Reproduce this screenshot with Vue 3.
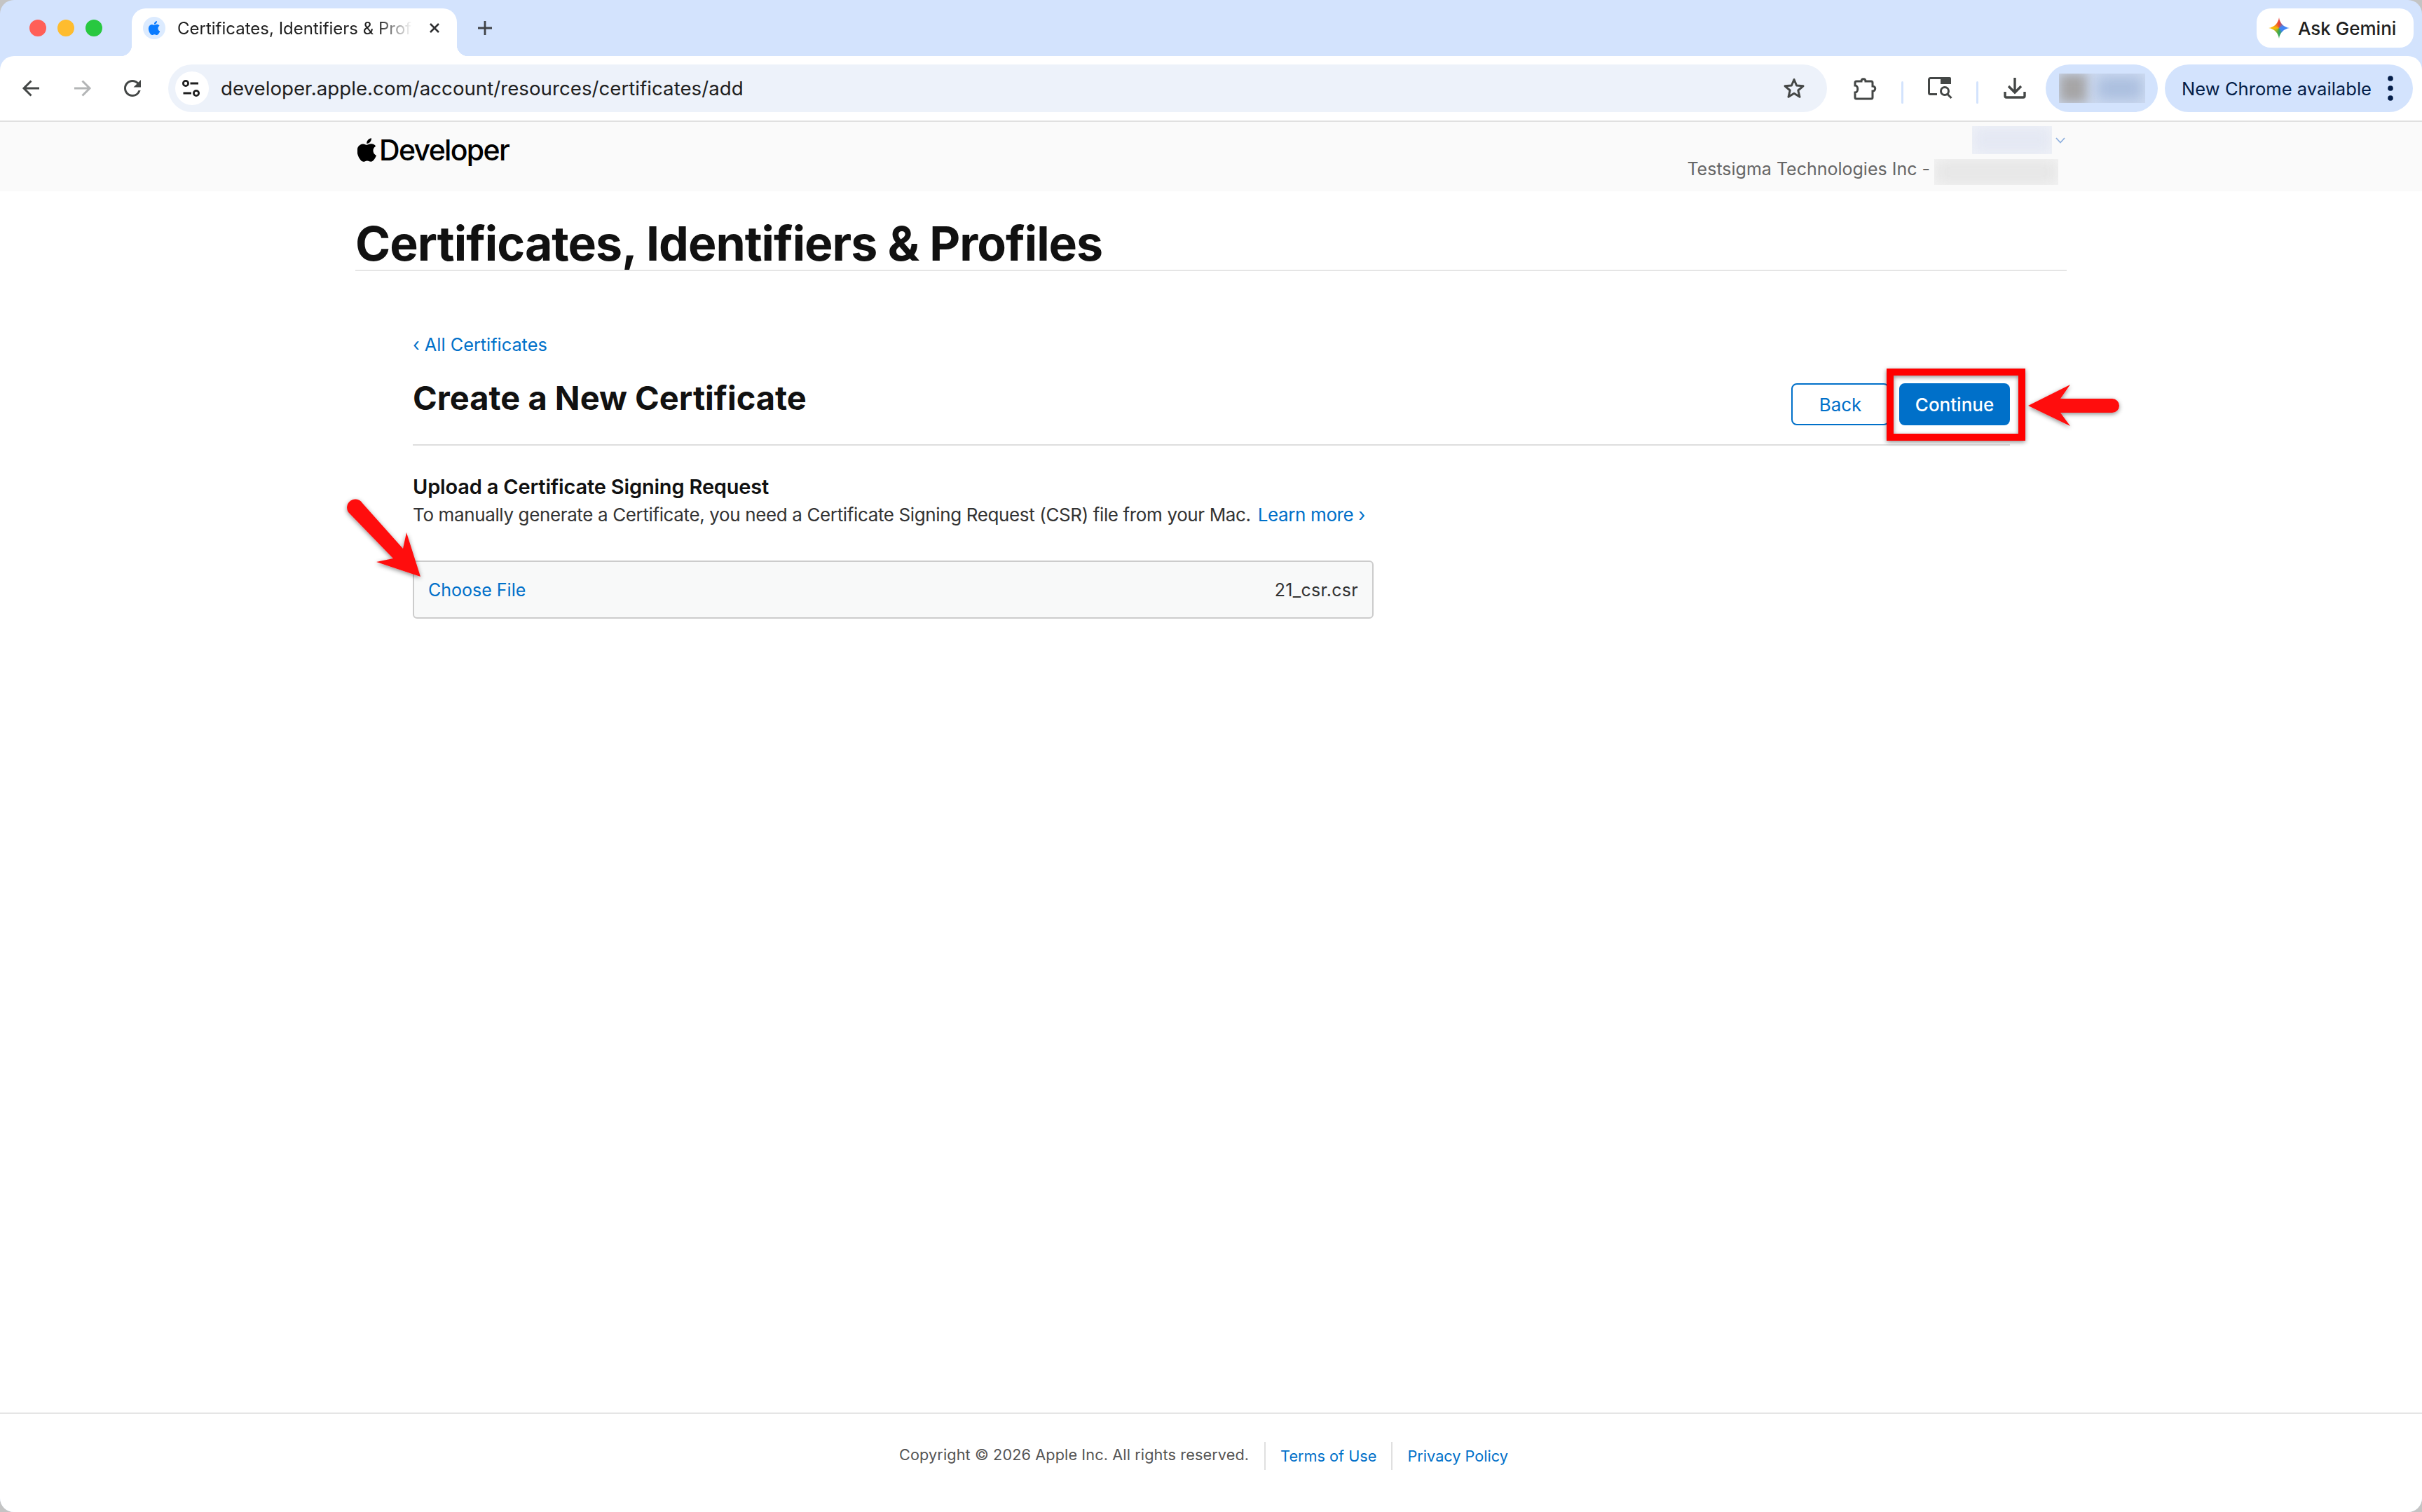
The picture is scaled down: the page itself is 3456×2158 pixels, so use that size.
<script setup>
const appleLogo =
  'M12.152 6.896c-.948 0-2.415-1.078-3.96-1.04-2.04.027-3.91 1.183-4.961 3.014-2.117 3.675-.546 9.103 1.519 12.09 1.013 1.454 2.208 3.09 3.792 3.039 1.52-.065 2.09-.987 3.935-.987 1.831 0 2.35.987 3.96.948 1.637-.026 2.676-1.48 3.676-2.948 1.156-1.688 1.636-3.325 1.662-3.415-.039-.013-3.182-1.221-3.22-4.857-.026-3.04 2.48-4.494 2.597-4.559-1.429-2.09-3.623-2.324-4.39-2.376-2-.156-3.675 1.09-4.61 1.09zM15.53 3.83c.843-1.012 1.4-2.427 1.245-3.83-1.207.052-2.662.805-3.532 1.818-.78.896-1.454 2.338-1.273 3.714 1.338.104 2.715-.688 3.559-1.701'
</script>

<template>
  <div class="window">
    <div class="tabstrip">
      <div class="lights">
        <span class="light red"></span>
        <span class="light yellow"></span>
        <span class="light green"></span>
      </div>
      <div class="tab">
        <span class="favicon">
          <svg width="20" height="20" viewBox="0 0 24 24"><path :d="appleLogo" fill="#0a7bff" /></svg>
        </span>
        <span class="tab-title">Certificates, Identifiers &amp; Profiles</span>
        <svg class="tab-close" width="16" height="16" viewBox="0 0 16 16">
          <path d="M2 2L14 14M14 2L2 14" stroke="#303133" stroke-width="2.6" fill="none" />
        </svg>
      </div>
      <svg class="new-tab" width="22" height="22" viewBox="0 0 22 22">
        <path d="M11 1V21M1 11H21" stroke="#3f4246" stroke-width="2.8" fill="none" />
      </svg>
      <div class="gemini">
        <span class="spark"></span>
        <span>Ask Gemini</span>
      </div>
    </div>

    <div class="toolbar">
      <button class="tool" type="button">
        <svg width="32" height="32" viewBox="0 0 32 32" fill="none" stroke="#444746" stroke-width="3">
          <path d="M27 16H6M15.5 5.5L5 16L15.5 26.5" />
        </svg>
      </button>
      <button class="tool" type="button">
        <svg width="32" height="32" viewBox="0 0 32 32" fill="none" stroke="#b3b5b6" stroke-width="3">
          <path d="M5 16H26M16.5 5.5L27 16L16.5 26.5" />
        </svg>
      </button>
      <button class="tool" type="button">
        <svg width="36" height="36" viewBox="0 0 24 24">
          <path
            fill="#444746"
            d="M17.65 6.35A7.958 7.958 0 0 0 12 4c-4.42 0-7.99 3.58-7.99 8s3.57 8 7.99 8c3.73 0 6.84-2.55 7.73-6h-2.08A5.99 5.99 0 0 1 12 18c-3.31 0-6-2.69-6-6s2.69-6 6-6c1.66 0 3.14.69 4.22 1.78L13 11h7V4l-2.35 2.35z"
          />
        </svg>
      </button>

      <div class="omnibox">
        <span class="site-info">
          <svg width="32" height="32" viewBox="0 0 32 32" fill="none" stroke="#1f1f1f" stroke-width="2.8">
            <circle cx="7" cy="9" r="3.6" />
            <path d="M13.5 9H25M3.5 23H15" />
            <circle cx="22" cy="23" r="3.6" />
          </svg>
        </span>
        <span class="url">developer.apple.com/account/resources/certificates/add</span>
        <svg class="star" width="32" height="32" viewBox="0 0 32 32">
          <path
            d="M16 3.5L19.6 12L29 12.8L21.8 19L24 28.3L16 23.3L8 28.3L10.2 19L3 12.8L12.4 12Z"
            fill="none"
            stroke="#444746"
            stroke-width="3"
            stroke-linejoin="round"
          />
        </svg>
      </div>

      <button class="tool tool-first" type="button">
        <svg width="33" height="33" viewBox="0 0 33 33" fill="none" stroke="#444746" stroke-width="3">
          <path
            d="M4 6H11C11 1.5 17 1.5 17 6H25A2 2 0 0 1 27 8V13C32 13 32 20 27 20V29A2 2 0 0 1 25 31H4A2 2 0 0 1 2 29V22C7 22 7 12 2 12V8A2 2 0 0 1 4 6Z"
          />
        </svg>
      </button>
      <span class="tool-sep"></span>
      <button class="tool" type="button">
        <svg width="35" height="32" viewBox="0 0 35 32" fill="none" stroke="#444746" stroke-width="3">
          <path d="M13 24.5H3.5A2 2 0 0 1 1.5 22.5V3.5A2 2 0 0 1 3.5 1.5H18" />
          <path d="M18 0H31A2 2 0 0 1 33 2V10H18Z" fill="#444746" stroke="none" />
          <circle cx="24" cy="20" r="5.5" />
          <path d="M28 24.5L33.5 30" />
        </svg>
      </button>
      <span class="tool-sep"></span>
      <button class="tool" type="button">
        <svg width="32" height="32" viewBox="0 0 32 32" fill="none" stroke="#444746" stroke-width="3.4">
          <path d="M16 1V21M7 13L16 22L25 13" />
          <path d="M2 21V27A2 2 0 0 0 4 29H28A2 2 0 0 0 30 27V21" />
        </svg>
      </button>
      <div class="profile">
        <span class="profile-blur">
          <i class="blur-avatar"></i>
          <i class="blur-name"></i>
        </span>
      </div>
      <div class="update-pill">
        <span>New Chrome available</span>
        <svg width="10" height="38" viewBox="0 0 10 38" fill="#041e49">
          <circle cx="5" cy="5" r="3.8" />
          <circle cx="5" cy="19" r="3.8" />
          <circle cx="5" cy="33" r="3.8" />
        </svg>
      </div>
    </div>

    <header class="dev-header">
      <div class="wrap dev-header-inner">
        <div class="dev-logo">
          <svg width="28" height="34" viewBox="2.5 0 20 24"><path :d="appleLogo" fill="#000" /></svg>
          <span>Developer</span>
        </div>
        <div class="account">
          <div class="account-name">
            <span class="blur-box blur-user"><i></i></span>
            <svg width="14" height="9" viewBox="0 0 14 9" fill="none" stroke="#8fb0de" stroke-width="1.8">
              <path d="M1 1L7 7.5L13 1" />
            </svg>
          </div>
          <div class="account-team">
            <span class="team-name">Testsigma Technologies Inc -</span>
            <span class="blur-box blur-team"><i></i></span>
          </div>
        </div>
      </div>
    </header>

    <main class="page">
      <div class="wrap">
        <h1 class="page-title">Certificates, Identifiers &amp; Profiles</h1>

        <div class="content">
          <a class="back-link" href="#">‹ All Certificates</a>

          <div class="form-head">
            <h2>Create a New Certificate</h2>
            <div class="form-actions">
              <button class="btn btn-outline" type="button">Back</button>
              <button class="btn btn-primary" type="button">Continue</button>
            </div>
          </div>

          <h3 class="section-title">Upload a Certificate Signing Request</h3>
          <p class="section-text">
            To manually generate a Certificate, you need a Certificate Signing Request (CSR) file from your Mac.
            <a href="#">Learn more ›</a>
          </p>

          <div class="file-box">
            <a href="#">Choose File</a>
            <span class="file-name">21_csr.csr</span>
          </div>
        </div>
      </div>
    </main>

    <footer class="page-footer">
      <span class="copyright">Copyright © 2026 Apple Inc. All rights reserved.</span>
      <a href="#">Terms of Use</a>
      <a href="#">Privacy Policy</a>
    </footer>

    <!-- annotations drawn on top of the screenshot -->
    <svg class="annotations" width="3456" height="2158" viewBox="0 0 3456 2158">
      <defs>
        <filter id="arrowShadow" x="-20%" y="-20%" width="140%" height="140%">
          <feDropShadow dx="0" dy="2" stdDeviation="3" flood-color="#000" flood-opacity="0.45" />
        </filter>
      </defs>
      <rect x="2697" y="531" width="188" height="93" fill="none" stroke="#ff0000" stroke-width="10" filter="url(#arrowShadow)" />
      <path
        d="M2894 579L2954 549L2940 569H3014A10 10 0 0 1 3014 589H2940L2954 608Z"
        fill="#ff0f0f"
        filter="url(#arrowShadow)"
      />
      <path
        d="M497 731A11.5 11.5 0 0 1 517 718L575 783L580 760L600 823L537 802L561 797Z"
        fill="#ff0f0f"
        filter="url(#arrowShadow)"
      />
    </svg>
  </div>
</template>

<style>
body {
  background: #c4c4c4;
}
</style>

<style scoped>
.window {
  position: relative;
  width: 3456px;
  height: 2158px;
  display: flex;
  flex-direction: column;
  overflow: hidden;
  background: #d3e3fd;
  border-radius: 20px;
  font-family: Inter, "Liberation Sans", sans-serif;
  color: #1f1f1f;
}

.tabstrip {
  height: 80px;
  flex: none;
  display: flex;
  align-items: flex-end;
  padding-left: 42px;
}

.lights {
  align-self: center;
  display: flex;
  gap: 16px;
  margin-right: 42px;
}

.light {
  width: 24px;
  height: 24px;
  border-radius: 50%;
}

.red {
  background: #ff5f57;
}

.yellow {
  background: #febc2e;
}

.green {
  background: #28c840;
}

.tab {
  position: relative;
  width: 464px;
  height: 68px;
  display: flex;
  align-items: center;
  padding: 0 24px 12px 16px;
  box-sizing: border-box;
  background: #fff;
  border-radius: 20px 20px 0 0;
}

.tab::before,
.tab::after {
  content: '';
  position: absolute;
  bottom: 0;
  width: 16px;
  height: 16px;
}

.tab::before {
  left: -16px;
  background: radial-gradient(circle at 0 0, #d3e3fd 16px, #fff 16.5px);
}

.tab::after {
  right: -16px;
  background: radial-gradient(circle at 100% 0, #d3e3fd 16px, #fff 16.5px);
}

.favicon {
  width: 32px;
  height: 32px;
  flex: none;
  display: flex;
  align-items: center;
  justify-content: center;
  border-radius: 50%;
  background: #dcebff;
}

.tab-title {
  flex: 1;
  min-width: 0;
  margin-left: 17px;
  margin-right: 24px;
  overflow: hidden;
  white-space: nowrap;
  font-size: 24px;
  color: #1f1f1f;
  -webkit-mask-image: linear-gradient(to right, #000 85%, transparent 100%);
  mask-image: linear-gradient(to right, #000 85%, transparent 100%);
}

.tab-close {
  flex: none;
}

.new-tab {
  align-self: center;
  margin-left: 29px;
}

.gemini {
  align-self: flex-start;
  margin: 12px 12px 0 auto;
  width: 224px;
  height: 56px;
  box-sizing: border-box;
  display: flex;
  align-items: center;
  gap: 12px;
  padding-left: 17px;
  background: #fff;
  border-radius: 20px;
  font-size: 26px;
  font-weight: 500;
}

.spark {
  width: 30px;
  height: 30px;
  background: conic-gradient(#ea4335 0deg, #4285f4 70deg, #4285f4 130deg, #34a853 180deg, #fbbc04 270deg, #ea4335 360deg);
  clip-path: path('M15 0C16 8 22 14 30 15C22 16 16 22 15 30C14 22 8 16 0 15C8 14 14 8 15 0Z');
}

.toolbar {
  height: 92px;
  flex: none;
  display: flex;
  align-items: flex-start;
  padding: 12px 12px 0 9px;
  box-sizing: border-box;
  background: #fff;
  border-radius: 20px 20px 0 0;
}

.tool {
  width: 72px;
  height: 68px;
  flex: none;
  display: flex;
  align-items: center;
  justify-content: center;
  padding: 0;
  border: none;
  background: none;
}

.omnibox {
  flex: none;
  width: 2367px;
  height: 68px;
  margin-left: 15px;
  margin-right: 18px;
  display: flex;
  align-items: center;
  padding: 0 31px 0 10px;
  box-sizing: border-box;
  background: #edf2fa;
  border-radius: 34px;
}

.site-info {
  width: 48px;
  height: 48px;
  flex: none;
  display: flex;
  align-items: center;
  justify-content: center;
  background: #fff;
  border-radius: 50%;
}

.url {
  flex: 1;
  margin-left: 17px;
  font-size: 27.7px;
  color: #1f1f1f;
  white-space: nowrap;
}

.tool-sep {
  width: 3px;
  height: 32px;
  flex: none;
  align-self: center;
  margin: 0 16px;
  border-radius: 2px;
  background: #d3e3fd;
}

.profile {
  width: 160px;
  height: 68px;
  flex: none;
  display: flex;
  align-items: center;
  justify-content: center;
  margin-left: 8px;
  margin-right: 10px;
  border-radius: 34px;
  background: #d3e3fd;
}

.profile-blur {
  width: 123px;
  height: 42px;
  display: flex;
  overflow: hidden;
  background: #cfdcf2;
}

.blur-avatar {
  width: 40px;
  background: #a6a5a6;
  filter: blur(8px);
}

.blur-name {
  flex: 1;
  margin: 4px 4px 4px 14px;
  background: #aabede;
  filter: blur(10px);
}

.update-pill {
  width: 354px;
  height: 68px;
  flex: none;
  display: flex;
  align-items: center;
  justify-content: space-between;
  padding: 0 27px 0 24px;
  box-sizing: border-box;
  border-radius: 34px;
  background: #d3e3fd;
  color: #041e49;
  font-size: 25.6px;
  white-space: nowrap;
}

.dev-header {
  height: 99px;
  flex: none;
  background: #fafafa;
  border-top: 2px solid #e0e0e0;
}

.wrap {
  width: 2442px;
  margin: 0 auto;
}

.dev-header-inner {
  display: flex;
  justify-content: space-between;
}

.dev-logo {
  display: flex;
  align-items: center;
  gap: 3px;
  height: 80px;
  margin-left: 3px;
  font-size: 41px;
  font-weight: 500;
  letter-spacing: -1.67px;
  color: #000;
}

.account {
  display: flex;
  flex-direction: column;
  align-items: flex-end;
  padding-top: 6px;
  margin-right: 12px;
}

.account-name {
  display: flex;
  align-items: center;
  gap: 5px;
  height: 40px;
  margin-right: -10px;
}

.blur-box {
  display: inline-block;
  overflow: hidden;
}

.blur-box i {
  display: block;
  height: 100%;
  filter: blur(10px);
}

.blur-user {
  width: 114px;
  height: 40px;
  background: #f1f3f8;
}

.blur-user i {
  background: #e4e8f3;
}

.blur-team {
  width: 177px;
  height: 37px;
  margin-left: 6px;
  background: #f5f5f5;
}

.blur-team i {
  background: #e6e6e6;
}

.account-team {
  display: flex;
  align-items: center;
  margin-top: 6px;
  font-size: 25px;
  color: #666;
}

.team-name {
  padding-bottom: 8px;
}

.page {
  flex: 1;
  background: #fff;
}

.page-title {
  margin: 34px 0 0;
  height: 78px;
  line-height: 80px;
  font-size: 68px;
  font-weight: 700;
  letter-spacing: -1px;
  color: #111;
  border-bottom: 2px solid #e5e5e5;
  box-sizing: content-box;
}

.content {
  padding: 88px 81px 0 82px;
}

.back-link {
  display: block;
  height: 34px;
  line-height: 34px;
  font-size: 25.3px;
  color: #0070c9;
  text-decoration: none;
}

.form-head {
  display: flex;
  justify-content: space-between;
  align-items: flex-start;
  margin-top: 38px;
  padding-bottom: 27px;
  border-bottom: 2px solid #dedede;
}

.form-head h2 {
  margin: 0;
  line-height: 42px;
  font-size: 47px;
  font-weight: 700;
  color: #111;
}

.form-actions {
  display: flex;
  gap: 14px;
}

.btn {
  height: 60px;
  padding: 0;
  border-radius: 8px;
  font-family: inherit;
  font-size: 26px;
}

.btn-outline {
  width: 140px;
  background: #fff;
  border: 2px solid #0070c9;
  color: #0070c9;
}

.btn-primary {
  width: 158px;
  background: #0070c9;
  border: 2px solid #0070c9;
  color: #fff;
  font-weight: 500;
}

.section-title {
  margin: 41px 0 0;
  line-height: 36px;
  font-size: 29px;
  font-weight: 600;
  letter-spacing: -0.18px;
  color: #111;
}

.section-text {
  margin: 4px 0 0;
  line-height: 36px;
  font-size: 26px;
  letter-spacing: -0.37px;
  color: #333;
}

.section-text a {
  margin-left: 3px;
  color: #0070c9;
  text-decoration: none;
}

.file-box {
  width: 1371px;
  height: 83px;
  margin-top: 47px;
  display: flex;
  align-items: center;
  justify-content: space-between;
  padding: 0 20px;
  box-sizing: border-box;
  background: #f8f9f9;
  border: 2px solid #ccc;
  border-radius: 6px;
  font-size: 25px;
  color: #333;
}

.file-box a {
  color: #0070c9;
  text-decoration: none;
}

.file-name {
  letter-spacing: 0.3px;
}

.page-footer {
  height: 142px;
  flex: none;
  display: flex;
  justify-content: center;
  align-items: flex-start;
  padding-top: 40px;
  box-sizing: border-box;
  background: #fff;
  border-top: 2px solid #e5e5e5;
  font-size: 21.7px;
}

.copyright {
  height: 40px;
  line-height: 36px;
  padding-right: 22px;
  letter-spacing: 0.1px;
  color: #555;
}

.page-footer a {
  height: 40px;
  line-height: 40px;
  padding: 0 21px;
  border-left: 2px solid #e0e0e0;
  color: #0070c9;
  text-decoration: none;
}

.annotations {
  position: absolute;
  top: 0;
  left: 0;
  pointer-events: none;
}
</style>
